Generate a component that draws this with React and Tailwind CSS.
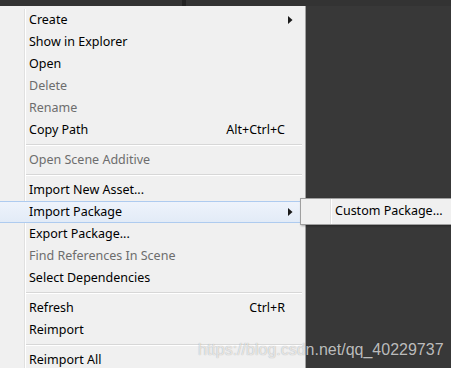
const items = [
  { label: "Create", arrow: true },
  { label: "Show in Explorer" },
  { label: "Open" },
  { label: "Delete", disabled: true },
  { label: "Rename", disabled: true },
  { label: "Copy Path", shortcut: "Alt+Ctrl+C" },
  { sep: true },
  { label: "Open Scene Additive", disabled: true },
  { sep: true },
  { label: "Import New Asset..." },
  { label: "Import Package", arrow: true, active: true },
  { label: "Export Package..." },
  { label: "Find References In Scene", disabled: true },
  { label: "Select Dependencies" },
  { sep: true },
  { label: "Refresh", shortcut: "Ctrl+R" },
  { label: "Reimport" },
  { sep: true },
  { label: "Reimport All" },
];

function Arrow() {
  return (
    <svg width="5" height="8" viewBox="0 0 5 8" className="shrink-0">
      <path d="M0 0 L4.5 4 L0 8 Z" fill="#1a1a1a" />
    </svg>
  );
}

function Gutter() {
  return (
    <div className="flex shrink-0 self-stretch">
      <div className="w-[24px]" />
      <div className="w-px bg-[#e0e0e0]" />
      <div className="w-px bg-white" />
    </div>
  );
}

function Row({ item }) {
  if (item.sep) {
    return (
      <div className="flex h-[8px]">
        <Gutter />
        <div className="flex flex-1 flex-col justify-center pr-[3px]">
          <div className="h-px bg-[#d7d7d7]" />
          <div className="h-px bg-white" />
        </div>
      </div>
    );
  }

  if (item.active) {
    return (
      <div className="flex h-[22px] items-center border-y border-[#aecbef] bg-gradient-to-b from-[#eef3fb] to-[#e2ebf7] mr-[3px] rounded-r-[2px]">
        <div className="w-[29px] shrink-0" />
        <span className="flex-1 text-black">{item.label}</span>
        <div className="w-[14px] flex items-center">
          <Arrow />
        </div>
      </div>
    );
  }

  return (
    <div className="flex h-[22px] items-center">
      <Gutter />
      <span
        className={
          "flex-1 pl-[3px] " + (item.disabled ? "text-[#6d6d6d]" : "text-black")
        }
      >
        {item.label}
      </span>
      {item.shortcut && <span className="pr-[20px] text-black">{item.shortcut}</span>}
      {item.arrow && (
        <div className="w-[17px] flex items-center">
          <Arrow />
        </div>
      )}
    </div>
  );
}

export default function App() {
  return (
    <div
      className="relative w-[451px] h-[368px] overflow-hidden bg-[#383838] text-[12.5px]"
      style={{ fontFamily: '"Noto Sans", sans-serif' }}
    >
      <div className="flex h-[6px] bg-[#333333]">
        <div className="w-[182px]" />
        <div className="w-[4px] bg-[#222222]" />
      </div>

      <div className="w-[306px] bg-[#f0f0f0] border-r border-[#a0a0a0] pt-[3px] pb-[20px]">
        {items.map((item, i) => (
          <Row key={i} item={item} />
        ))}
      </div>

      <div className="absolute left-[300px] top-[198px] w-[170px] h-[27px] bg-[#f0f0f0] border border-[#a0a0a0] shadow-[1px_1px_2px_rgba(0,0,0,0.3)] flex items-center">
        <div className="w-[29px] self-stretch" />
        <div className="w-px self-stretch bg-[#e0e0e0]" />
        <div className="w-px self-stretch bg-white" />
        <span className="pl-[3px] text-black">Custom Package...</span>
      </div>

      <div
        className="absolute left-[198px] top-[338px] text-[16px] text-white/70 [text-shadow:0_0_1px_rgba(0,0,0,0.35)]"
        style={{ fontFamily: '"Liberation Sans", Arial, sans-serif' }}
      >
        https://blog.csdn.net/qq_40229737
      </div>
    </div>
  );
}
